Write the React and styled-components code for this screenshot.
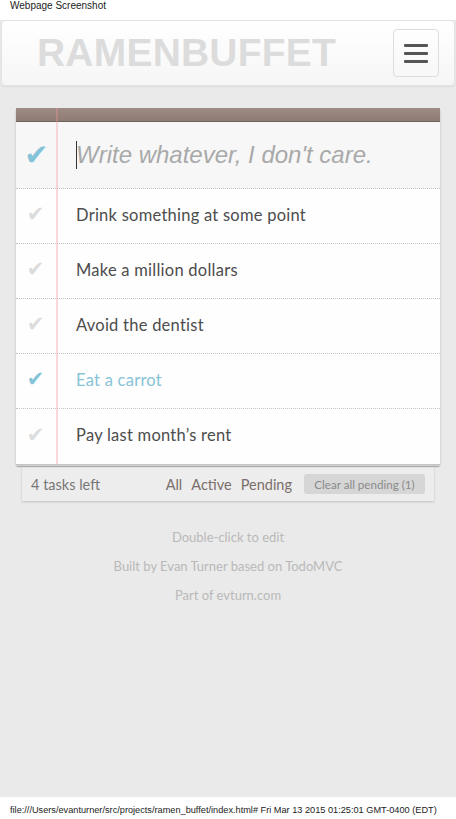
import React from 'react'
import styled, { createGlobalStyle } from 'styled-components'

const TODOS = [
  { id: 1, title: 'Drink something at some point', done: false },
  { id: 2, title: 'Make a million dollars', done: false },
  { id: 3, title: 'Avoid the dentist', done: false },
  { id: 4, title: 'Eat a carrot', done: true },
  { id: 5, title: "Pay last month\u2019s rent", done: false },
]

const GlobalStyle = createGlobalStyle`
  html, body {
    margin: 0;
    padding: 0;
    background: #ffffff;
  }
  * { box-sizing: border-box; }
`

const Page = styled.div`
  display: flex;
  flex-direction: column;
  min-height: 100vh;
  font-family: Lato, "Open Sans", sans-serif;
`

const CaptureBar = styled.div`
  height: ${p => p.$height}px;
  background: #fff;
  color: #222;
  font-family: "Liberation Sans", Arial, sans-serif;
  font-size: ${p => p.$size}px;
  padding: ${p => p.$top}px 0 0 10px;
  white-space: nowrap;
  overflow: hidden;
`

const Main = styled.div`
  flex: 1;
  background: #eaeaea;
  display: flex;
  flex-direction: column;
`

const Header = styled.header`
  height: 66px;
  margin: 0 1px;
  border: 1px solid #e2e2e2;
  border-radius: 4px;
  background: linear-gradient(#ffffff, #f6f6f6);
  box-shadow: 0 1px 2px rgba(0, 0, 0, 0.06);
  display: flex;
  align-items: center;
  justify-content: space-between;
  padding: 0 15px 0 35px;
`

const Logo = styled.h1`
  margin: 0;
  font-family: "Liberation Sans", Arial, sans-serif;
  font-weight: 700;
  font-size: 39px;
  color: #dcdcdc;
  letter-spacing: 0.2px;
`

const MenuButton = styled.button`
  width: 46px;
  height: 48px;
  border: 1px solid #dddddd;
  border-radius: 4px;
  background: transparent;
  display: flex;
  flex-direction: column;
  align-items: center;
  justify-content: center;
  gap: 5px;
  padding: 0;
`

const MenuLine = styled.span`
  display: block;
  width: 24px;
  height: 3px;
  border-radius: 1px;
  background: #555;
`

const Board = styled.section`
  margin: 22px 16px 0;
  display: flex;
  flex-direction: column;
  align-items: stretch;
`

const Card = styled.div`
  position: relative;
  background: #fff;
  box-shadow:
    0 2px 2px rgba(0, 0, 0, 0.22),
    0 3px 0 -1px #f6f6f6,
    0 4px 1px -1px rgba(0, 0, 0, 0.2);

  &::before {
    content: '';
    position: absolute;
    top: 0;
    bottom: 0;
    left: 40px;
    width: 2px;
    background: rgba(240, 150, 150, 0.35);
    pointer-events: none;
  }
`

const Binding = styled.div`
  height: 14px;
  background: linear-gradient(#9e8c84, #8e7c74);
  border-bottom: 1px solid #6f625c;
`

const Row = styled.div`
  display: flex;
  align-items: center;
  height: ${p => (p.$entry ? 67 : 55)}px;
  padding-bottom: ${p => (p.$entry ? 0 : 3)}px;
  background: ${p => (p.$entry ? '#f7f7f7' : '#fefefe')};
  border-bottom: ${p => (p.$last ? 'none' : '1px dotted #c4c4c4')};
`

const CheckCell = styled.div`
  width: 41px;
  flex: none;
  display: flex;
  justify-content: center;
  font-family: "DejaVu Sans", sans-serif;
  font-size: ${p => (p.$big ? 29 : 21)}px;
  line-height: 1;
  color: ${p => (p.$on ? '#84c3d8' : '#dcdcdc')};
  padding-right: ${p => (p.$big ? 0 : 2)}px;
`

const EntryField = styled.div`
  position: relative;
  flex: 1;
  margin-left: 19px;
  height: 100%;
  display: flex;
  align-items: center;
`

const EntryInput = styled.input`
  width: 100%;
  border: none;
  outline: none;
  background: transparent;
  padding: 0;
  font-family: "Liberation Sans", Arial, sans-serif;
  font-style: italic;
  font-size: 24px;
  color: #444;

  &::placeholder {
    color: #a9a9a9;
  }
`

const Caret = styled.span`
  position: absolute;
  left: 0;
  top: 50%;
  width: 1px;
  height: 28px;
  margin-top: -14px;
  background: #333;
`

const Title = styled.label`
  margin-left: 19px;
  font-size: 16.5px;
  color: ${p => (p.$done ? '#87c3d7' : '#4d4d4d')};
  letter-spacing: 0.25px;
`

const Footer = styled.footer`
  margin: 3px 6px 0;
  height: 34px;
  background: #ededed;
  box-shadow: 0 1px 2px rgba(0, 0, 0, 0.18);
  display: flex;
  align-items: center;
  padding: 0 9px;
  color: #777;
  font-size: 14.5px;
`

const Count = styled.span`
  flex: 1;
`

const Filters = styled.nav`
  display: flex;
  gap: 9px;
  margin-right: 12px;
`

const FilterLink = styled.a`
  color: #7a6f6b;
  text-decoration: none;
`

const ClearButton = styled.button`
  height: 20px;
  width: 121px;
  border: none;
  border-radius: 3px;
  background: #d6d6d6;
  color: #8a8a8a;
  font-family: Lato, "Open Sans", sans-serif;
  font-size: 11.6px;
  padding: 0;
`

const Info = styled.div`
  margin-top: 28px;
  display: flex;
  flex-direction: column;
  align-items: center;
  gap: 13px;
  color: #b9b9b9;
  font-size: 13px;
  line-height: 16px;
`

export default function App() {
  const left = TODOS.filter(t => !t.done).length
  const pending = TODOS.length - left
  return (
    <Page>
      <GlobalStyle />
      <CaptureBar $height={20} $top={0} $size={10}>Webpage Screenshot</CaptureBar>
      <Main>
        <Header>
          <Logo>RAMENBUFFET</Logo>
          <MenuButton aria-label="menu">
            <MenuLine />
            <MenuLine />
            <MenuLine />
          </MenuButton>
        </Header>
        <Board>
          <Card>
            <Binding />
            <Row $entry>
              <CheckCell $big $on>{'\u2714'}</CheckCell>
              <EntryField>
                <Caret />
                <EntryInput placeholder="Write whatever, I don't care." />
              </EntryField>
            </Row>
            {TODOS.map((todo, i) => (
              <Row key={todo.id} $last={i === TODOS.length - 1}>
                <CheckCell $on={todo.done}>{'\u2714'}</CheckCell>
                <Title $done={todo.done}>{todo.title}</Title>
              </Row>
            ))}
          </Card>
          <Footer>
            <Count>{left} tasks left</Count>
            <Filters>
              <FilterLink href="#/">All</FilterLink>
              <FilterLink href="#/active">Active</FilterLink>
              <FilterLink href="#/pending">Pending</FilterLink>
            </Filters>
            <ClearButton>Clear all pending ({pending})</ClearButton>
          </Footer>
        </Board>
        <Info>
          <span>Double-click to edit</span>
          <span>Built by Evan Turner based on TodoMVC</span>
          <span>Part of evturn.com</span>
        </Info>
      </Main>
      <CaptureBar $height={22} $top={8} $size={9.2}>
        file:///Users/evanturner/src/projects/ramen_buffet/index.html# Fri Mar 13 2015 01:25:01 GMT-0400 (EDT)
      </CaptureBar>
    </Page>
  )
}
